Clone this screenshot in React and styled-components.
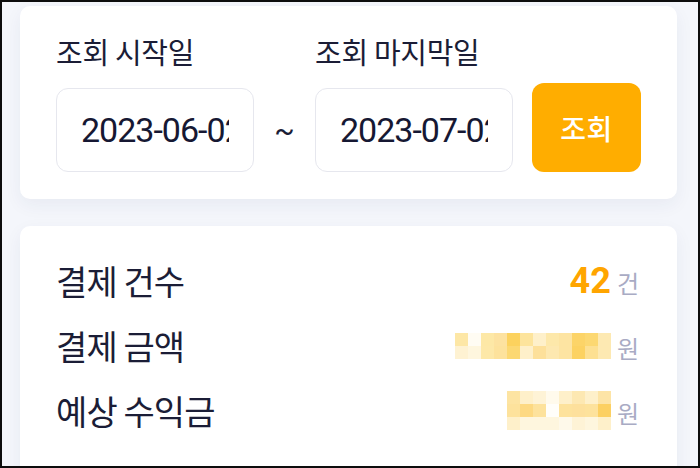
import React from 'react';
import styled, { createGlobalStyle } from 'styled-components';

const GlobalStyle = createGlobalStyle`
  html, body {
    margin: 0;
    padding: 0;
    background: #f4f6fb;
  }
  * {
    box-sizing: border-box;
  }
`;

const Frame = styled.div`
  width: 700px;
  height: 468px;
  overflow: hidden;
  border: 2px solid #0d0d0d;
  background: #f4f6fb;
  padding: 4px 21px 0 18px;
  display: flex;
  flex-direction: column;
  gap: 27px;
  font-family: Roboto, "Noto Sans CJK KR", sans-serif;
  color: #1b1d36;
`;

const Card = styled.section`
  background: #ffffff;
  border-radius: 10px;
  box-shadow: 0 6px 18px rgba(40, 50, 110, 0.06);
  padding: ${p => p.$padding};
  flex-shrink: 0;
`;

const SearchRow = styled.div`
  display: flex;
  align-items: flex-end;
`;

const Field = styled.div`
  display: flex;
  flex-direction: column;
  gap: 18px;
  width: 198px;
`;

const FieldLabel = styled.label`
  font-family: "Noto Sans CJK KR", sans-serif;
  font-size: 29px;
  line-height: 38px;
  letter-spacing: -0.3px;
  font-weight: 400;
  white-space: nowrap;
`;

const DateInput = styled.input`
  width: 198px;
  height: 84px;
  border: 1px solid #e6e7ee;
  border-radius: 12px;
  background: #fff;
  padding: 0 24px;
  font-family: Roboto, sans-serif;
  font-size: 34px;
  letter-spacing: -1px;
  color: #161833;
  outline: none;
`;

const Tilde = styled.div`
  width: 61px;
  height: 84px;
  display: flex;
  align-items: center;
  justify-content: center;
  font-size: 30px;
  color: #1b1d36;
`;

const SearchButton = styled.button`
  margin-left: 19px;
  width: 109px;
  height: 89px;
  border: none;
  border-radius: 12px;
  background: #ffad00;
  color: #fff;
  font-family: "Noto Sans CJK KR", sans-serif;
  font-size: 28px;
  font-weight: 500;
  letter-spacing: 0.5px;
  cursor: pointer;
`;

const StatList = styled.div`
  display: flex;
  flex-direction: column;
`;

const StatRow = styled.div`
  height: 65px;
  display: flex;
  align-items: center;
  justify-content: space-between;
`;

const StatLabel = styled.span`
  font-family: "Noto Sans CJK KR", sans-serif;
  font-size: 34px;
  letter-spacing: -0.9px;
  line-height: 42px;
`;

const StatValue = styled.span`
  display: flex;
  align-items: center;
  gap: 6px;
`;

const Count = styled.span`
  font-family: Roboto, sans-serif;
  font-size: 36px;
  font-weight: 700;
  color: #ffa500;
  line-height: 40px;
`;

const Unit = styled.span`
  font-family: "Noto Sans CJK KR", sans-serif;
  font-size: 24px;
  color: #a9abc4;
  line-height: 40px;
  padding-top: 4px;
`;

const CELL = 13;

function Mosaic({ cells }) {
  const rows = cells.length;
  const cols = cells[0].length;
  return (
    <svg width={cols * CELL} height={rows * CELL} viewBox={`0 0 ${cols * CELL} ${rows * CELL}`}>
      {cells.map((row, r) =>
        row.map((c, i) => (
          <rect key={`${r}-${i}`} x={i * CELL} y={r * CELL} width={CELL} height={CELL} fill={c} />
        ))
      )}
    </svg>
  );
}

const amountCells = [
  ['#fde7a6', '#fffcf3', '#fde8a6', '#fde2a0', '#fcd25e', '#fde49c', '#fef0ca', '#fde8aa', '#fde4a2', '#fcd468', '#fcd872', '#fde9b2'],
  ['#fef2d2', '#fef6de', '#fde8a8', '#fde29c', '#fcd872', '#fef0ca', '#fde09a', '#fde8b0', '#fde4a2', '#fcd262', '#fde092', '#fde9b2'],
];

const profitCells = [
  ['#fde4a2', '#fef0ca', '#fef3d6', '#fffaec', '#fef0ca', '#fde8b2', '#fef0ca', '#fde4a6'],
  ['#fde29c', '#fdd982', '#fde29c', '#fffefa', '#fde29c', '#fde09c', '#fde29c', '#fcd062'],
  ['#fef0ca', '#fef6de', '#fef6de', '#fef6de', '#fef9ea', '#fef3d6', '#fef6de', '#fef0ca'],
];

export default function App() {
  return (
    <>
      <GlobalStyle />
      <Frame>
        <Card $padding="26px 36px 27px 36px">
          <SearchRow>
            <Field>
              <FieldLabel>조회 시작일</FieldLabel>
              <DateInput type="text" readOnly value="2023-06-02" />
            </Field>
            <Tilde>~</Tilde>
            <Field>
              <FieldLabel>조회 마지막일</FieldLabel>
              <DateInput type="text" readOnly value="2023-07-02" />
            </Field>
            <SearchButton>조회</SearchButton>
          </SearchRow>
        </Card>
        <Card $padding="22px 38px 40px 36px">
          <StatList>
            <StatRow>
              <StatLabel>결제 건수</StatLabel>
              <StatValue>
                <Count>42</Count>
                <Unit>건</Unit>
              </StatValue>
            </StatRow>
            <StatRow>
              <StatLabel>결제 금액</StatLabel>
              <StatValue>
                <Mosaic cells={amountCells} />
                <Unit>원</Unit>
              </StatValue>
            </StatRow>
            <StatRow>
              <StatLabel>예상 수익금</StatLabel>
              <StatValue>
                <Mosaic cells={profitCells} />
                <Unit>원</Unit>
              </StatValue>
            </StatRow>
          </StatList>
        </Card>
      </Frame>
    </>
  );
}
